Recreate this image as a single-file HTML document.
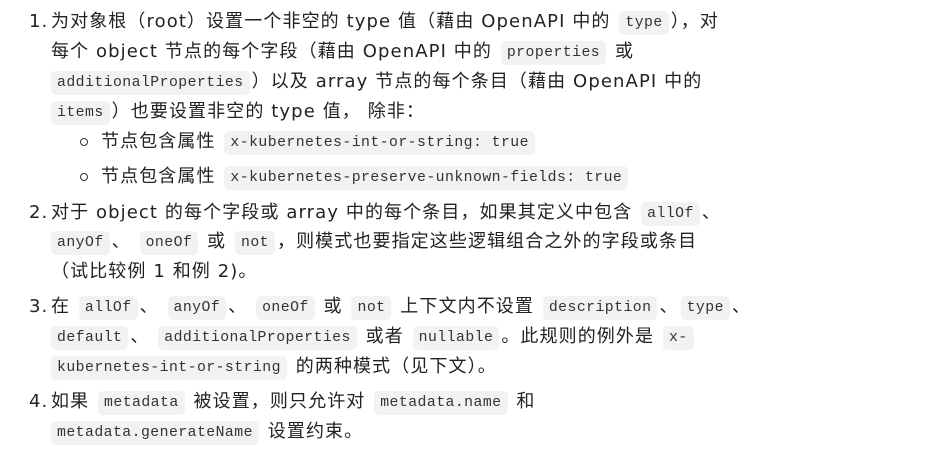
<!DOCTYPE html>
<html><head><meta charset="utf-8"><style>
body{margin:0;width:940px;height:452px;background:#fff;overflow:hidden;font-family:"DejaVu Sans","Noto Sans CJK SC",sans-serif;font-size:18px;color:#222;letter-spacing:1.1px;}
.l{position:absolute;white-space:nowrap;height:30px;line-height:30px;}
code{font-family:"Liberation Mono","DejaVu Sans Mono",monospace;font-size:14.8px;letter-spacing:0.45px;background:#f2f2f2;border-radius:5px;padding:4px 6px;margin:0 2px;color:#333;vertical-align:1px;}
.b{position:absolute;left:80px;width:6px;height:6px;border:1.5px solid #333;border-radius:50%;top:11px;}
</style></head><body>
<div class="l" style="top:7px;left:29px">1.</div>
<div class="l" style="top:7px;left:51px">为对象根（root）设置一个非空的 type 值（藉由 OpenAPI 中的 <code>type</code>），对</div>
<div class="l" style="top:37px;left:51px">每个 object 节点的每个字段（藉由 OpenAPI 中的 <code>properties</code> 或</div>
<div class="l" style="top:67px;left:49px"><code>additionalProperties</code>）以及 array 节点的每个条目（藉由 OpenAPI 中的</div>
<div class="l" style="top:97px;left:49px"><code>items</code>）也要设置非空的 type 值， 除非：</div>
<div class="l" style="top:127px;left:0"><span class="b"></span><span style="position:absolute;left:101px">节点包含属性 <code>x-kubernetes-int-or-string: true</code></span></div>
<div class="l" style="top:162px;left:0"><span class="b"></span><span style="position:absolute;left:101px">节点包含属性 <code>x-kubernetes-preserve-unknown-fields: true</code></span></div>
<div class="l" style="top:198px;left:29px">2.</div>
<div class="l" style="top:198px;left:51px">对于 object 的每个字段或 array 中的每个条目，如果其定义中包含 <code>allOf</code>、</div>
<div class="l" style="top:227px;left:49px"><code>anyOf</code>、 <code>oneOf</code> 或 <code>not</code>，则模式也要指定这些逻辑组合之外的字段或条目</div>
<div class="l" style="top:257px;left:51px">（试比较例 1 和例 2)。</div>
<div class="l" style="top:292px;left:29px">3.</div>
<div class="l" style="top:292px;left:51px">在 <code>allOf</code>、 <code>anyOf</code>、 <code>oneOf</code> 或 <code>not</code> 上下文内不设置 <code>description</code>、<code>type</code>、</div>
<div class="l" style="top:322px;left:49px"><code>default</code>、 <code>additionalProperties</code> 或者 <code>nullable</code>。此规则的例外是 <code>x-</code></div>
<div class="l" style="top:352px;left:49px"><code>kubernetes-int-or-string</code> 的两种模式（见下文）。</div>
<div class="l" style="top:387px;left:29px">4.</div>
<div class="l" style="top:387px;left:51px">如果 <code>metadata</code> 被设置，则只允许对 <code>metadata.name</code> 和</div>
<div class="l" style="top:417px;left:49px"><code>metadata.generateName</code> 设置约束。</div>
</body></html>
